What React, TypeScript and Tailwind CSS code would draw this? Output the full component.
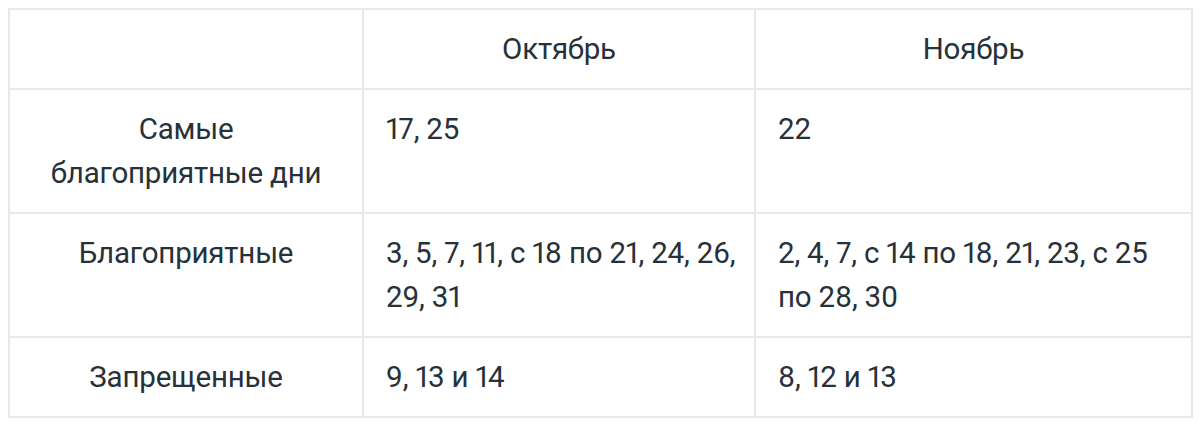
import React from "react";

const rows = [
  { label: ["Самые", "благоприятные дни"], oct: "17, 25", nov: "22" },
  { label: ["Благоприятные"], oct: "3, 5, 7, 11, с 18 по 21, 24, 26, 29, 31", nov: "2, 4, 7, с 14 по 18, 21, 23, с 25 по 28, 30" },
  { label: ["Запрещенные"], oct: "9, 13 и 14", nov: "8, 12 и 13" },
];

export default function App() {
  return (
    <div className="bg-white w-[1200px] h-[425px] pt-[8px] pl-[8px]" style={{ fontFamily: "Roboto, 'Noto Sans', sans-serif" }}>
      <table className="table-fixed w-[1183px] border-collapse text-[#27313a] text-[29.5px] leading-[44px] tracking-[-0.2px] proportional-nums">
        <colgroup>
          <col className="w-[354px]" />
          <col className="w-[392px]" />
          <col className="w-[437px]" />
        </colgroup>
        <thead>
          <tr>
            <th className="border-2 border-[#e8e8e8] h-[80px] font-normal"></th>
            <th className="border-2 border-[#e8e8e8] font-normal text-center align-top pt-[17px] pb-[17px]">Октябрь</th>
            <th className="border-2 border-[#e8e8e8] font-normal text-center align-top pt-[17px] pb-[17px]">Ноябрь</th>
          </tr>
        </thead>
        <tbody>
          {rows.map((r, i) => (
            <tr key={i}>
              <td className="border-2 border-[#e8e8e8] align-top text-center px-[22px] pt-[17px] pb-[17px]">
                {r.label.map((l, j) => (
                  <div key={j}>{l}</div>
                ))}
              </td>
              <td className="border-2 border-[#e8e8e8] align-top pl-[22px] pr-[14px] pt-[17px] pb-[17px]">{r.oct}</td>
              <td className="border-2 border-[#e8e8e8] align-top pl-[22px] pr-[14px] pt-[17px] pb-[17px]">{r.nov}</td>
            </tr>
          ))}
        </tbody>
      </table>
    </div>
  );
}
